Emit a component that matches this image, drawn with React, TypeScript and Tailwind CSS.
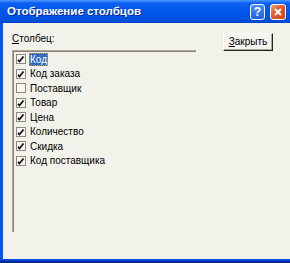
import React from "react";

const columns = [
	{ label: "Код", checked: true },
	{ label: "Код заказа", checked: true },
	{ label: "Поставщик", checked: false },
	{ label: "Товар", checked: true },
	{ label: "Цена", checked: true },
	{ label: "Количество", checked: true },
	{ label: "Скидка", checked: true },
	{ label: "Код поставщика", checked: true },
];

const CheckBox = ({ checked }: { checked: boolean }) => (
	<div className="w-[10px] h-[10px] shrink-0 border border-[#8c8a80] bg-[#f7f6f0]">
		{checked && (
			<svg width="8" height="8" viewBox="0 0 8 8" className="block">
				<polyline points="1,5 2.5,6.5 6.5,1.5" fill="none" stroke="#111" strokeWidth="1.8" />
			</svg>
		)}
	</div>
);

export default function App() {
	return (
		<div className="w-[290px] h-[263px] flex flex-col bg-[#f3f2ea] [font-family:'Liberation_Sans',Arial,sans-serif] overflow-hidden">
			{/* Заголовок окна */}
			<div className="h-[23px] shrink-0 flex items-center pl-[7px] pr-[4px] bg-[linear-gradient(to_bottom,#4a97ff_0%,#0b60f2_14%,#0056e8_50%,#0052e0_85%,#0043c8_100%)]">
				<span className="text-white font-bold text-[11.5px] leading-none [text-shadow:1px_1px_#0a2a9c]">
					Отображение столбцов
				</span>
				<div className="ml-auto flex items-center gap-[5px]">
					<div className="w-[15px] h-[16px] rounded-[3px] border border-white bg-[linear-gradient(to_bottom,#4c8cff,#2260ea)] flex items-center justify-center text-white font-bold text-[12px] leading-none">
						?
					</div>
					<div className="w-[16px] h-[16px] rounded-[3px] border border-white bg-[linear-gradient(135deg,#f0a070_0%,#e0582c_45%,#d2471e_100%)] flex items-center justify-center">
						<svg width="10" height="10" viewBox="0 0 10 10">
							<path d="M2 2 L8 8 M8 2 L2 8" stroke="#fff" strokeWidth="2" />
						</svg>
					</div>
				</div>
			</div>

			{/* Тело окна */}
			<div className="flex-1 flex border-l-[3px] border-[#0058ee]">
				<div className="w-[193px] pl-[9px] pt-[9px] flex flex-col">
					<div className="text-[10px] leading-[13px] text-black">
						<span className="underline">С</span>толбец:
					</div>
					<div className="mt-[5px] h-[182px] border-t border-l border-[#aca899]">
						<div className="h-full border-t border-l border-[#8b8174] pl-[2px] flex flex-col">
							{columns.map((col, index) => (
								<div key={col.label} className="h-[14.5px] flex items-center gap-[3px]">
									<CheckBox checked={col.checked} />
									<span
										className={`text-[10px] leading-[13px] px-[1px] whitespace-nowrap ${
											index === 0
												? "bg-[#316ac5] text-white outline outline-1 outline-dotted outline-[#c9a040] -outline-offset-1"
												: "text-black"
										}`}
									>
										{col.label}
									</span>
								</div>
							))}
						</div>
					</div>
				</div>

				<div className="ml-auto pt-[10px] pr-[17px]">
					<button className="w-[50px] h-[18px] flex items-center justify-center bg-[#f5f4ee] border-t border-l border-white border-r border-b border-r-[#222] border-b-[#222] shadow-[inset_-1px_-1px_0_#aca899] text-[10px] leading-none text-black">
						<span className="underline">З</span>акрыть
					</button>
				</div>
			</div>

			<div className="h-[4px] shrink-0 bg-[linear-gradient(to_bottom,#0a5ef0,#0030b8_50%,#001c90)]" />
		</div>
	);
}
